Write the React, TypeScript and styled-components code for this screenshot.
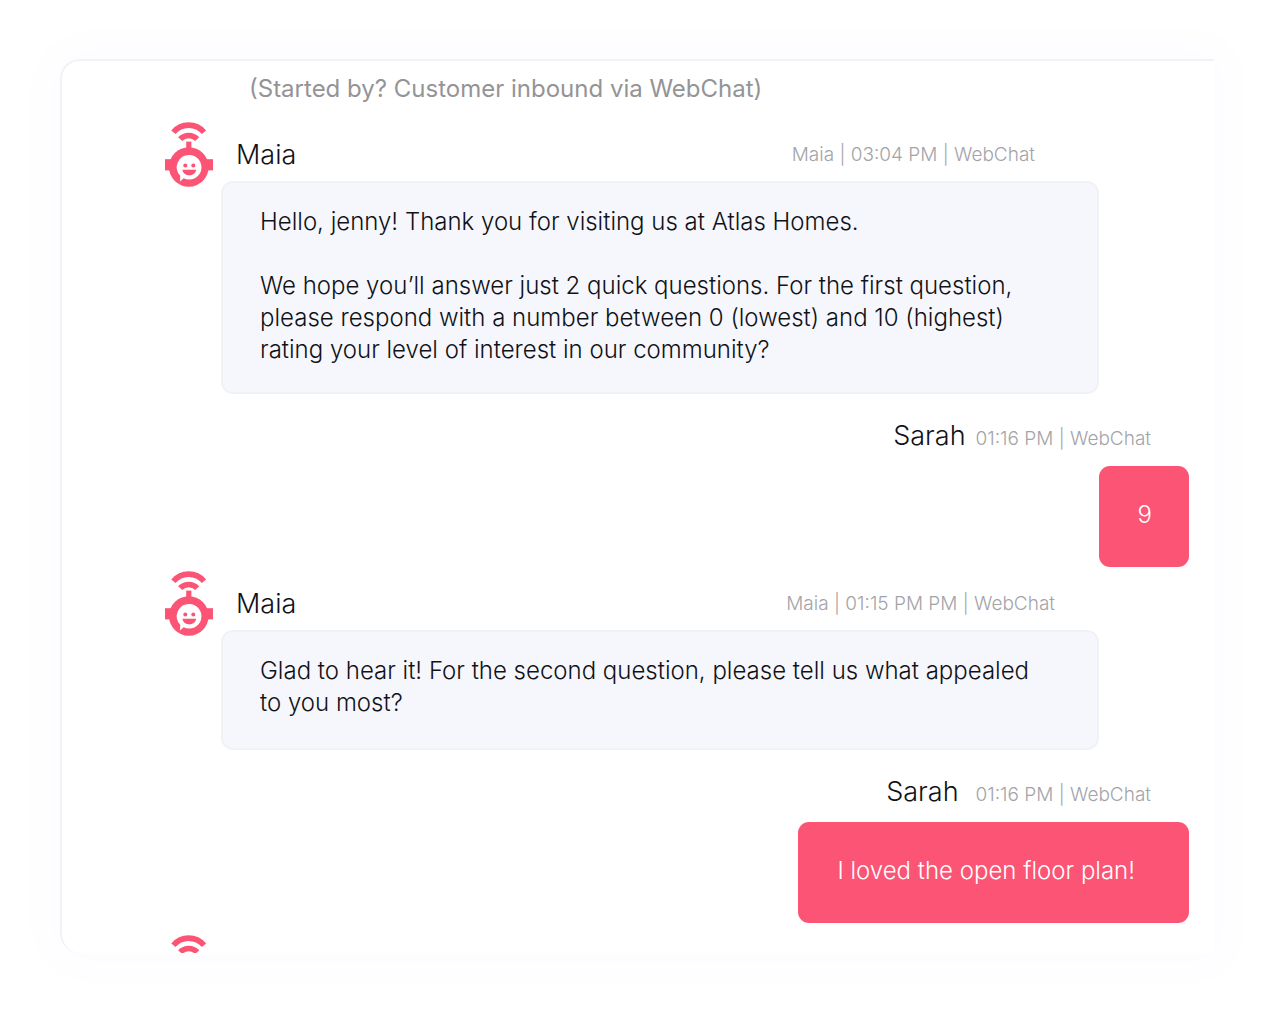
import React from "react";
import styled, { createGlobalStyle } from "styled-components";

const GlobalStyle = createGlobalStyle`
  *, *::before, *::after { box-sizing: border-box; }
  body {
    margin: 0;
    background: #fff;
    font-family: Inter, "Liberation Sans", sans-serif;
    font-weight: 300;
    color: #111217;
  }
`;

const Page = styled.div`
  padding: 59px 59px 59px 60px;
`;

const Card = styled.main`
  display: flex;
  flex-direction: column;
  padding: 12px 25px 0 103px;
  background: #fff;
  border-top: 2px solid #f2f2f6;
  border-left: 2px solid #f2f2f6;
  border-radius: 20px 0 0 20px;
  box-shadow: 0 0 44px 10px rgba(120, 70, 255, 0.024);
`;

const Note = styled.p`
  margin: 0 0 17px 84px;
  font-size: 24px;
  line-height: 32px;
  font-weight: 400;
  color: #949497;
`;

const Incoming = styled.article`
  display: grid;
  grid-template-columns: 48px minmax(0, 1fr);
  column-gap: 8px;
  margin-right: 90px;
`;

const Column = styled.div`
  padding-top: 17px;
`;

const IncomingHeader = styled.header<{ $inset: number }>`
  display: flex;
  align-items: center;
  justify-content: space-between;
  margin-bottom: 10px;
  padding: 0 ${(p) => p.$inset}px 0 15px;
`;

const Name = styled.h2`
  margin: 0;
  font-size: 27px;
  line-height: 32px;
  font-weight: 300;
`;

const Meta = styled.span`
  font-size: 19px;
  line-height: 24px;
  color: #a4a4a7;
`;

const IncomingBubble = styled.div`
  min-height: 120px;
  padding: 23px 44px 26px 37px;
  background: #f6f7fc;
  border: 2px solid #f1f2f5;
  border-radius: 12px;
  font-size: 24px;
  line-height: 32px;
`;

const Line = styled.p`
  margin: 0;
  & + & { margin-top: 32px; }
`;

const Outgoing = styled.article<{ $after: number }>`
  display: flex;
  flex-direction: column;
  align-items: flex-end;
  margin: 26px 0 ${(p) => p.$after}px;
`;

const OutgoingHeader = styled.header<{ $gap: number }>`
  display: flex;
  align-items: baseline;
  gap: ${(p) => p.$gap}px;
  margin-bottom: 14px;
  padding-right: 38px;
`;

const OutgoingBubble = styled.p<{ $end: number }>`
  margin: 0;
  padding: 33px ${(p) => p.$end}px 36px 39px;
  background: #fc5474;
  border-radius: 11px;
  color: #fff;
  font-size: 24px;
  line-height: 32px;
`;

const Peek = styled.div`
  height: 18px;
  overflow: hidden;
`;

const RobotSvg = styled.svg`
  display: block;
  width: 48px;
  height: 65px;
`;

function Robot() {
  return (
    <RobotSvg viewBox="0 0 48 65" aria-hidden="true">
      <g fill="none" stroke="#fc5474" strokeWidth="5.6">
        <path d="M8.4 10.2 A20 20 0 0 1 39 10.2" />
        <path d="M15.2 17.2 A11.6 11.6 0 0 1 32.2 17.2" />
      </g>
      <g fill="#fc5474">
        <rect x="21.2" y="19.6" width="5.2" height="8" />
        <rect x="0" y="37.2" width="48" height="11.2" />
        <circle cx="23.8" cy="45" r="19.8" />
      </g>
      <path
        fill="#fff"
        d="M24.3 33 A12.3 12.3 0 1 1 18.7 56.3 L15 59.5 L15.2 53.8 A12.3 12.3 0 0 1 24.3 33 Z"
      />
      <g fill="#fc5474">
        <circle cx="20.3" cy="43.4" r="2" />
        <circle cx="28.3" cy="43.4" r="2" />
        <path d="M17.4 47.8 H31.2 C30 55.2 18.6 55.2 17.4 47.8 Z" />
      </g>
    </RobotSvg>
  );
}

type IncomingProps = { meta: string; inset: number; lines: string[] };

function IncomingMessage({ meta, inset, lines }: IncomingProps) {
  return (
    <Incoming>
      <Robot />
      <Column>
        <IncomingHeader $inset={inset}>
          <Name>Maia</Name>
          <Meta>{meta}</Meta>
        </IncomingHeader>
        <IncomingBubble>
          {lines.map((line) => (
            <Line key={line}>{line}</Line>
          ))}
        </IncomingBubble>
      </Column>
    </Incoming>
  );
}

type OutgoingProps = { text: string; gap: number; end: number; after: number };

function OutgoingMessage({ text, gap, end, after }: OutgoingProps) {
  return (
    <Outgoing $after={after}>
      <OutgoingHeader $gap={gap}>
        <Name>Sarah</Name>
        <Meta>01:16 PM | WebChat</Meta>
      </OutgoingHeader>
      <OutgoingBubble $end={end}>{text}</OutgoingBubble>
    </Outgoing>
  );
}

export default function App() {
  return (
    <>
      <GlobalStyle />
      <Page>
        <Card>
          <Note>(Started by? Customer inbound via WebChat)</Note>
          <IncomingMessage
            meta="Maia | 03:04 PM | WebChat"
            inset={64}
            lines={[
              "Hello, jenny! Thank you for visiting us at Atlas Homes.",
              "We hope you’ll answer just 2 quick questions. For the first question, please respond with a number between 0 (lowest) and 10 (highest) rating your level of interest in our community?",
            ]}
          />
          <OutgoingMessage text="9" gap={10} end={37} after={4} />
          <IncomingMessage
            meta="Maia | 01:15 PM PM | WebChat"
            inset={44}
            lines={[
              "Glad to hear it! For the second question, please tell us what appealed to you most?",
            ]}
          />
          <OutgoingMessage text="I loved the open floor plan!" gap={17} end={54} after={12} />
          <Peek>
            <Robot />
          </Peek>
        </Card>
      </Page>
    </>
  );
}
